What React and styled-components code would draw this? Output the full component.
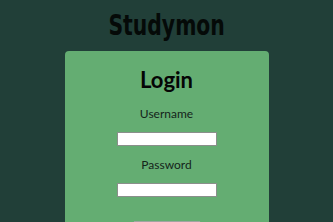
import React from 'react';
import styled, { createGlobalStyle } from 'styled-components';

const GlobalStyle = createGlobalStyle`
  html, body {
    margin: 0;
    padding: 0;
    background-color: #213f38;
    font-family: 'Lato', 'Noto Sans', sans-serif;
  }
`;

const Page = styled.div`
  min-height: 100vh;
  display: flex;
  flex-direction: column;
  align-items: center;
`;

const Brand = styled.h1`
  margin: 8px 0 0;
  height: 43px;
  font-family: 'DejaVu Sans Condensed', 'DejaVu Sans', sans-serif;
  font-weight: bold;
  font-size: 29px;
  line-height: 34px;
  color: #050a08;
  transform: scaleX(0.78);
`;

const Card = styled.form`
  width: 204px;
  background-color: #64ad72;
  border-radius: 4px;
  display: flex;
  flex-direction: column;
  align-items: center;
  padding: 14px 0 20px;
`;

const Title = styled.h2`
  margin: 0;
  font-size: 22px;
  line-height: 30px;
  font-weight: bold;
  color: #050505;
`;

const Label = styled.label`
  margin-top: ${({ top }) => top};
  font-size: 12px;
  line-height: 14px;
  color: #14241a;
`;

const Input = styled.input`
  margin-top: 11px;
  width: 100px;
  height: 14px;
  box-sizing: border-box;
  border: 1px solid #8a8f8b;
  background: #fff;
  padding: 0;
`;

const Button = styled.button`
  margin-top: 24px;
  width: 68px;
  height: 20px;
  border: 1px solid #a0a5a1;
  border-radius: 2px;
  background: #f4f4f4;
  font-family: 'Lato', sans-serif;
  font-size: 11px;
`;

function App() {
  return (
    <>
      <GlobalStyle />
      <Page>
        <Brand>Studymon</Brand>
        <Card onSubmit={(e) => e.preventDefault()}>
          <Title>Login</Title>
          <Label top='12px'>Username</Label>
          <Input type='text' />
          <Label top='12px'>Password</Label>
          <Input type='password' />
          <Button type='submit'>Login</Button>
        </Card>
      </Page>
    </>
  );
}

export default App;
